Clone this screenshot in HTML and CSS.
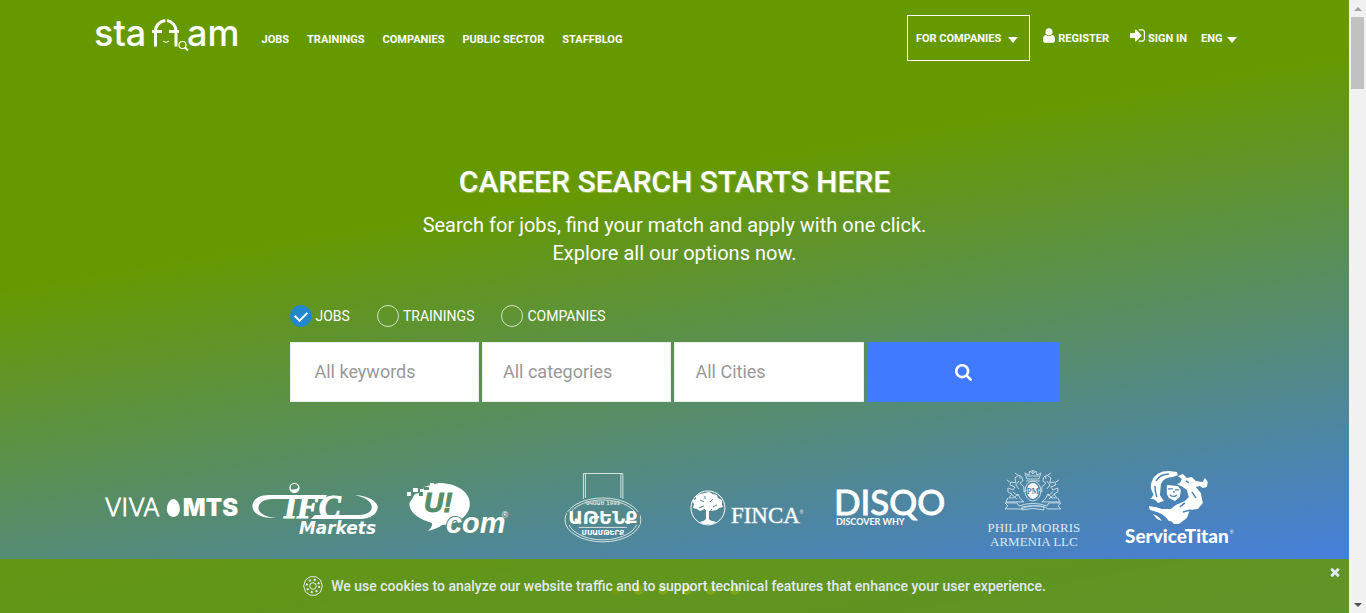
FILE: index.html
```html
<!DOCTYPE html>
<html lang="en">
<head>
<meta charset="utf-8">
<title>staff.am</title>
<meta name="viewport" content="width=device-width, initial-scale=1">
<link rel="stylesheet" href="styles.css">
</head>
<body>
<div class="page">
  <div class="hero">
    <header class="header">
      <a class="logo" href="#" aria-label="staff.am">
        <svg class="logo-img" viewBox="0 -8 144 54">
          <text class="logo-text" x="-1" y="31">sta</text>
          <g fill="none" stroke="#fff" stroke-width="3">
            <path d="M60.500 31.500V16a11 10.500 0 0 1 9.800-10.500M72 5.500A11 10.500 0 0 1 81 16V31.500"/>
            <path d="M57 16.500h10M74 16.500H84"/>
            <path d="M68 26q3 3 6 0" stroke-width="1"/>
            <circle cx="87.500" cy="30" r="3.500" stroke-width="1.200"/>
            <path d="M90 32.500l3 3" stroke-width="2"/>
          </g>
          <text class="logo-text" x="92" y="31">am</text>
        </svg>
      </a>
      <nav class="nav">
        <a href="#">JOBS</a>
        <a href="#">TRAININGS</a>
        <a href="#">COMPANIES</a>
        <a href="#">PUBLIC SECTOR</a>
        <a href="#">STAFFBLOG</a>
      </nav>
      <div class="account">
        <button class="for-companies" type="button">FOR COMPANIES <span class="caret"></span></button>
        <a class="register" href="#"><svg class="user-icon" viewBox="256 128 1280 1536"><path d="M1536 1399q0 109-62.500 187t-150.500 78h-854q-88 0-150.500-78t-62.500-187q0-85 8.500-160.500t31.500-152 58.500-131 94-89 134.500-34.500q131 128 313 128t313-128q76 0 134.500 34.500t94 89 58.500 131 31.500 152 8.500 160.500zm-256-887q0 159-112.500 271.500t-271.500 112.500-271.500-112.500-112.500-271.500 112.500-271.500 271.500-112.500 271.500 112.500 112.500 271.500z"/></svg>REGISTER</a>
        <a class="signin" href="#"><svg class="signin-icon" viewBox="128 256 1536 1280"><path d="M1312 896q0 26-19 45l-544 544q-19 19-45 19t-45-19-19-45v-288h-448q-26 0-45-19t-19-45v-384q0-26 19-45t45-19h448v-288q0-26 19-45t45-19 45 19l544 544q19 19 19 45zm352-352v704q0 119-84.500 203.500t-203.500 84.500h-320q-13 0-22.500-9.500t-9.500-22.500q0-4-1-20t-.5-26.500 3-23.500 10-19.500 20.500-6.500h320q66 0 113-47t47-113v-704q0-66-47-113t-113-47h-312l-11.500-1-11.500-3-8-5.500-7-9-2-13.500q0-4-1-20t-.5-26.500 3-23.500 10-19.500 20.500-6.500h320q119 0 203.500 84.500t84.500 203.500z"/></svg>SIGN IN</a>
        <button class="language" type="button">ENG <span class="caret"></span></button>
      </div>
    </header>

    <main class="search">
      <h1 class="title">CAREER SEARCH STARTS HERE</h1>
      <p class="subtitle">Search for jobs, find your match and apply with one click.<br>Explore all our options now.</p>
      <form class="form">
        <div class="types">
          <label class="type"><input type="radio" name="type" checked>JOBS</label>
          <label class="type"><input type="radio" name="type">TRAININGS</label>
          <label class="type"><input type="radio" name="type">COMPANIES</label>
        </div>
        <div class="fields">
          <input class="field keywords" type="text" placeholder="All keywords" aria-label="All keywords">
          <select class="field" aria-label="Category"><option>All categories</option></select>
          <select class="field" aria-label="City"><option>All Cities</option></select>
          <button class="submit" type="submit" aria-label="Search"><svg class="search-icon" viewBox="64 128 1664 1664"><path d="M1216 832q0-185-131.500-316.500t-316.500-131.500-316.500 131.500-131.500 316.500 131.500 316.500 316.500 131.500 316.500-131.500 131.500-316.500zm512 832q0 52-38 90t-90 38q-54 0-90-38l-343-342q-179 124-399 124-143 0-273.500-55.500t-225-150-150-225-55.500-273.500 55.500-273.500 150-225 225-150 273.500-55.500 273.500 55.500 225 150 150 225 55.500 273.500q0 220-124 399l343 343q37 37 37 90z"/></svg></button>
        </div>
      </form>
    </main>

    <section class="partners" aria-label="Partners">
      <a href="#" aria-label="Viva MTS"><svg viewBox="0 0 144 90">
        <text x="5" y="51" class="viva">VIVA</text>
        <path d="M73.500 34c3.500 0 6.500 5.500 6.500 10s-3 8-6.500 8-6.500-3.500-6.500-8 3-10 6.500-10z"/>
        <text x="83" y="51" class="mts">MTS</text>
      </svg></a>
      <a href="#" aria-label="IFC Markets"><svg viewBox="0 0 144 90">
        <circle cx="51.500" cy="23" r="4.500" fill="none" stroke="#fff" stroke-width="1.300"/><path d="M47 24a4.500 4.500 0 0 0 9-2q-3 4-9 2z"/>
        <path d="M84 30H26C13 30 9 37 9.500 42c.5 6 8 12 24 11-12-1-18-5-18-10 0-5 5-9 14-9h53z"/>
        <path d="M112 30c14 1 22 6 23 12 0 6-6 12-18 12H68l4-4h44c8 0 13-3 13-8s-7-10-17-12z"/>
        <text x="41" y="53" class="ifc">IFC</text>
        <text x="56" y="69" class="markets">Markets</text>
      </svg></a>
      <a href="#" aria-label="Ucom"><svg viewBox="0 0 144 90">
        <path d="M52 18c18 0 31 9 31 21S70 60 55 60q-3 3-14 6 5-4 4-8C31 54 22 47 22.500 38L28 29l8-2 1-5z"/>
        <path d="M20 27h4v4h-4zM26 23h5v4h-5zM27 30h6v5h-6zM33 24h4v4h-4zM43 18h4v4h-4z"/>
        <path d="M32 27h4v4h-4zM37 22h5v3h-5z" fill="#568e6b"/>
        <text x="37" y="47" class="uc">U!</text>
        <text x="59" y="68" class="com">com</text>
        <text x="115" y="53" class="reg">®</text>
      </svg></a>
      <a href="#" aria-label="Աթենք"><svg viewBox="0 0 144 90">
        <g fill="none" stroke="#d5e4e0" stroke-width="1">
          <path d="M52.500 34V8.500H92V34M54.500 33V9M90 33V9"/>
          <ellipse cx="72" cy="55" rx="38" ry="22"/><ellipse cx="72" cy="55" rx="35" ry="20"/>
          <path d="M48 62.500h48"/>
        </g>
        <rect x="36" y="47" width="73" height="13" fill="#528986"/>
        <text x="72" y="40" class="since">ՍԿՍԱԾ 1993</text>
        <text x="72" y="59" class="athenk">ԱԹԵՆՔ</text>
        <text x="72" y="70" class="msamterk">ՄՍԱՄԹԵՐՔ</text>
      </svg></a>
      <a href="#" aria-label="FINCA"><svg viewBox="0 0 144 90">
        <circle cx="33" cy="43" r="17" fill="none" stroke="#fff" stroke-width="1"/>
        <path d="M30 28l4-1 4 2 4 1 1 3 4 2 0 4 1 3-4 1-2 2-6 1-2 0 0 8 4 4h-11l4-4 0-8-1-2-5 2-3-2-4-1 1-4-2-3 4-2 0-3 4-2z"/>
        <path d="M25 35l4 2M38 34l-3 3M24 43l5-2M38 42l4-2M30 31v3M29 44l2 3M37 44l-2 3" fill="none" stroke="#528986" stroke-width="1"/>
        <path d="M25 57q8-3 16 0l-3 2h-10z"/>
        <text x="56" y="58" class="finca">FINCA</text><text x="125" y="49" class="tiny">®</text>
      </svg></a>
      <a href="#" aria-label="DISQO"><svg viewBox="0 0 144 90">
        <text x="16" y="50" class="disqo">DISQO</text>
        <text x="18" y="60" class="discover">DISCOVER WHY</text>
      </svg></a>
      <a href="#" aria-label="Philip Morris Armenia LLC"><svg viewBox="0 0 144 90">
        <g fill="none" stroke="#c3dae5" stroke-width="1">
          <path d="M65 14l-2-6 4 2 1-4 3 3 3-3 1 4 4-2-2 6zM65 11h12M71 5v4M69 6h4M64 16h14"/>
          <path d="M62 37q-4-2-6-8l-4 4-5 0 3-4-4-2 0-4 5 2 2-3-5-2 1-3 5 1-1-5 4-3 3 2 1 4-3 2 4 4 0 5 3-2M56 10l-3-2M48 17l-3-2M57 16l-3 4 3 4M46 33l-2 4h18M51 27l5 4M58 11v3M49 29l6 5"/>
          <path d="M80 37q4-2 6-8l4 4 5 0-3-4 4-2 0-4-5 2-2-3 5-2-1-3-5 1 1-5-4-3-3 2-1 4 3 2-4 4 0 5-3-2M86 10l3-2M94 17l3-2M85 16l3 4-3 4M96 33l2 4H80M91 27l-5 4M84 11v3M93 29l-6 5"/>
          <path d="M43 38h12l2 3q14-5 28 0l2-3h12l-3 3 3 3H86l-3-2q-12-3-24 2l-3 0H43l3-3zM60 42q11-3 22 0v3q-11-3-22 0z"/>
          <ellipse cx="71" cy="26" rx="8" ry="10"/>
        </g>
        <ellipse cx="71" cy="26" rx="6" ry="8"/>
        <text x="71" y="29" class="pm">PM</text>
        <text x="72" y="67" class="philip">PHILIP MORRIS</text>
        <text x="72" y="81" class="philip">ARMENIA LLC</text>
      </svg></a>
      <a href="#" aria-label="ServiceTitan"><svg viewBox="0 0 144 90">
        <path d="M48 30q-5-7-2-14Q50 6 63 6l8 1 1 3-5 2q-9 0-12 7l-1 11 4 6-6 2q-4-5-8-4 4-3 4-7z"/>
        <path d="M50 16q4-7 13-7M49 21q0 6 2 11" fill="none" stroke="#4b83bb" stroke-width="1.500"/>
        <path d="M61 20l11 1 3 4-1 7-5 4-6-3-2-4z"/>
        <path d="M62 24l5 0M69 25l4 0M64 30q4 3 7 0M68 26l0 2" fill="none" stroke="#4b83bb" stroke-width="1.300"/>
        <path d="M74 18l2-4-4-3 5-2 4 4 5-1 4 4 7 1 2-4 3 4-1 5-4 1-3-2-4 1 5 6 2 10-5 6-8 1-3 8-8 6-5 0q-8-11-20-13l-5-3 6-1 7 2 9 0 5-4 9-4 4-4-2-7-4-3-6-3z"/>
        <path d="M43 41q19 2 28 16l-8-1q-6-9-19-11zM47 49q6 2 9 7l-5-2z"/>
        <path d="M80 16l3 2M77 47l8-2M86 27l4 6M74 42l5-4" fill="none" stroke="#4b83bb" stroke-width="1.500"/>
        <text x="71" y="78" class="titan">ServiceTitan</text><text x="124" y="69" class="tiny">®</text>
      </svg></a>
    </section>
    <div class="dots"><i></i><i></i><i></i><i></i><i></i><i></i></div>
  </div>

  <aside class="cookies">
    <svg class="cookie-icon" viewBox="0 0 20 20">
      <path d="M7 .8h6L17.500 4l1.800 6-1.800 6L13 19.200H7L2.500 16 .7 10 2.500 4z"/>
      <circle cx="10" cy="10" r="3.300"/>
      <circle cx="10" cy="10" r="6.200" stroke-width="2" stroke-dasharray="2 2.870"/>
    </svg>
    <p>We use cookies to analyze our website traffic and to support technical features that enhance your user experience.</p>
    <button class="close" type="button" aria-label="Close"><svg viewBox="302 238 1188 1316"><path d="M1490 1322q0 40-28 68l-136 136q-28 28-68 28t-68-28l-294-294-294 294q-28 28-68 28t-68-28l-136-136q-28-28-28-68t28-68l294-294-294-294q-28-28-28-68t28-68l136-136q28-28 68-28t68 28l294 294 294-294q28-28 68-28t68 28l136 136q28 28 28 68t-28 68l-294 294 294 294q28 28 28 68z"/></svg></button>
  </aside>
</div>
<div class="scrollbar" aria-hidden="true"><span class="up"></span><span class="thumb"></span><span class="down"></span></div>
</body>
</html>
```
FILE: styles.css
```css
* { box-sizing: border-box; }
body {
  margin: 0;
  height: 100vh;
  display: flex;
  overflow: hidden;
  font-family: Roboto, "Liberation Sans", sans-serif;
  color: #fff;
}
a { color: inherit; text-decoration: none; }
button { font: inherit; color: inherit; background: none; border: 0; padding: 0; }
svg { display: block; fill: #fff; }
.page { flex: 1; position: relative; overflow: hidden; }
.hero {
  padding-bottom: 45px;
  background: linear-gradient(170deg, #690 33%, #407bff 100%);
}

.header {
  max-width: 1170px;
  margin: 0 auto;
  padding: 15px 23px 0 5px;
  display: flex;
  align-items: center;
  font-size: 11px;
  font-weight: 700;
}
.logo-img { width: 144px; height: 54px; margin-top: -8px; }
.logo-text { font: 500 36px Inter, sans-serif; }
.nav { display: flex; gap: 18px; margin-left: 23px; padding-top: 2px; }
.account { display: flex; align-items: center; margin-left: auto; }
.caret {
  display: inline-block;
  margin-top: 3px;
  border: 5px solid transparent;
  border-top: 6px solid #fff;
  border-bottom: 0;
}
.for-companies {
  height: 46px;
  padding: 0 11px 0 8px;
  border: 1px solid #fff;
  display: flex;
  align-items: center;
  gap: 7px;
}
.register, .signin, .language { display: flex; align-items: center; }
.register { margin-left: 13px; gap: 3px; }
.signin { margin-left: 21px; gap: 3px; }
.language { margin-left: 14px; gap: 4px; }
.user-icon { width: 12px; height: 15px; margin-bottom: 5px; }
.signin-icon { width: 15px; height: 13px; margin-bottom: 5px; }

.search { max-width: 770px; margin: 0 auto; padding-top: 103px; }
.title {
  margin: 0;
  text-align: center;
  font-size: 30px;
  line-height: 36px;
  font-weight: 500;
  text-shadow: 1px 1px 1px rgba(255, 255, 255, .4);
}
.subtitle { margin: 11px 0 0; text-align: center; font-size: 20px; line-height: 28px; }
.types { display: flex; gap: 27px; margin-top: 38px; font-size: 14px; }
.type { display: flex; align-items: center; gap: 4px; }
.type input {
  appearance: none;
  width: 22px;
  height: 22px;
  margin: 0;
  border: 1px solid #d5dfc6;
  border-radius: 50%;
  display: grid;
  place-items: center;
}
.type input:checked { background: #2388cb; border-color: #2388cb; }
.type input:checked::before {
  content: "";
  width: 10px;
  height: 6px;
  margin-bottom: 3px;
  border: solid #fff;
  border-width: 0 0 2px 2px;
  transform: rotate(-45deg);
}
.fields { display: grid; grid-template-columns: 63fr 63fr 63fr 64fr; gap: 3px; margin-top: 15px; }
.field {
  appearance: none;
  min-width: 0;
  width: 100%;
  height: 60px;
  padding: 0 20px 2px;
  border: 1px solid #eee;
  border-radius: 0;
  background: #fff;
  font: 18px Roboto, sans-serif;
  color: #999;
}
.keywords { padding: 0 24px 2px; }
.field::placeholder { color: #999; opacity: 1; }
.submit { background: #407bff; display: grid; place-items: center; }
.search-icon { width: 17px; height: 17px; }

.partners {
  max-width: 1150px;
  margin: 63px auto 0;
  display: grid;
  grid-template-columns: repeat(8, 1fr);
}
.partners svg { width: 100%; }
.viva { font: 200 24px "DejaVu Sans", sans-serif; stroke: #fff; stroke-width: 1px; }
.mts { font: 900 24px Inter, sans-serif; }
.ifc { font: italic 700 33px "Liberation Serif", serif; stroke: #fff; stroke-width: 1px; }
.markets { font: italic 700 17px "DejaVu Sans", sans-serif; }
.uc { font: italic 700 27px "Liberation Sans", sans-serif; fill: #568e6b; stroke: #568e6b; stroke-width: 1px; }
.com {
  font: italic 700 29px "Liberation Sans", sans-serif;
  stroke: #538a7a;
  stroke-width: 2px;
  paint-order: stroke;
}
.reg { font: 9px "Liberation Sans", sans-serif; }
.tiny { font: 5px "Liberation Sans", sans-serif; }
.athenk, .msamterk, .since, .pm, .philip, .titan { text-anchor: middle; }
.athenk { font: 700 18px "DejaVu Sans", sans-serif; }
.msamterk { font: 700 7px "DejaVu Sans", sans-serif; }
.since { font: 700 5px "DejaVu Sans", sans-serif; fill: #d5e4e0; }
.finca { font: 23px "Liberation Serif", serif; stroke: #fff; stroke-width: 1px; stroke-opacity: .4; }
.disqo { font: 400 35px Lato, sans-serif; stroke: #fff; stroke-width: 1px; }
.discover { font: 700 9px Lato, sans-serif; }
.pm { font: 700 8px "Liberation Serif", serif; fill: #4b83a5; }
.philip { font: 13px "Liberation Serif", serif; fill: #dce9f2; }
.titan { font: 900 19px Lato, sans-serif; }

.dots { display: flex; justify-content: center; gap: 14px; margin-top: 30px; }
.dots i { width: 10px; height: 10px; border-radius: 50%; background: #e6e6b0; }
.dots i:first-child { background: #9a9a50; }

.cookies {
  position: absolute;
  left: 0;
  right: 0;
  bottom: 0;
  min-height: 54px;
  padding-bottom: 1px;
  display: flex;
  align-items: center;
  justify-content: center;
  gap: 8px;
  background: #690;
  opacity: .83;
  font-size: 14px;
  font-weight: 500;
}
.cookies p { margin: 0; }
.cookie-icon { width: 20px; height: 20px; fill: none; stroke: #fff; }
.close { position: absolute; top: 8px; right: 9px; }
.close svg { width: 10px; height: 10px; }

.scrollbar {
  width: 17px;
  background: #f1f1f1;
  display: flex;
  flex-direction: column;
  align-items: center;
  padding: 7px 0 6px;
}
.up, .down { border: 4px solid transparent; }
.up { border-top: 0; border-bottom-color: #a3a3a3; }
.down { border-bottom: 0; border-top-color: #505050; margin-top: auto; }
.thumb { width: 13px; height: 12%; margin-top: 6px; background: #c1c1c1; }
```
